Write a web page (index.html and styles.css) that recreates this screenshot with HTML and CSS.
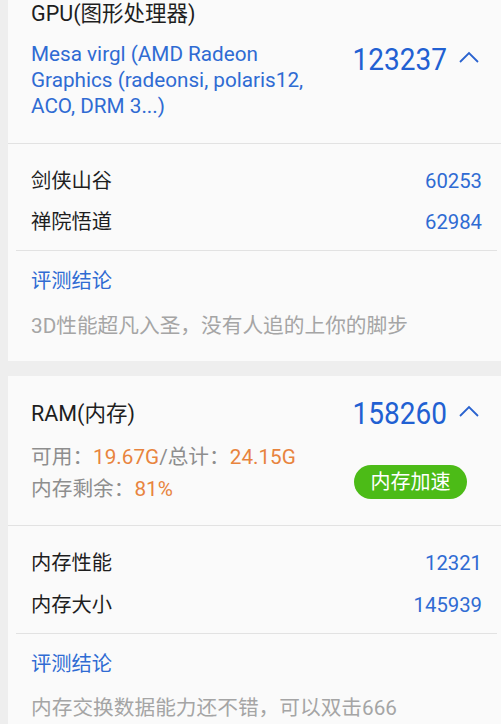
FILE: index.html
```html
<!DOCTYPE html>
<html lang="zh">
<head>
<meta charset="utf-8">
<link rel="stylesheet" href="styles.css">
</head>
<body>
<div class="page">
  <section class="card gpu">
    <div class="head">
      <div class="title">GPU(图形处理器)</div>
      <div class="head-body">
        <div class="model">Mesa virgl (AMD Radeon Graphics (radeonsi, polaris12, ACO, DRM 3...)</div>
        <div class="score">
          <span class="num">123237</span>
          <svg class="chev" width="20" height="12" viewBox="0 0 20 12"><polyline points="1,11 10,2 19,11" fill="none" stroke="#2a63cf" stroke-width="1.8"/></svg>
        </div>
      </div>
    </div>
    <div class="rows">
      <div class="row"><span>剑侠山谷</span><span class="val">60253</span></div>
      <div class="row"><span>禅院悟道</span><span class="val">62984</span></div>
    </div>
    <div class="concl">
      <div class="concl-title">评测结论</div>
      <div class="concl-text">3D性能超凡入圣，没有人追的上你的脚步</div>
    </div>
  </section>

  <section class="card ram">
    <div class="head">
      <div class="head-top">
        <div class="title">RAM(内存)</div>
        <div class="score">
          <span class="num">158260</span>
          <svg class="chev" width="20" height="12" viewBox="0 0 20 12"><polyline points="1,11 10,2 19,11" fill="none" stroke="#2a63cf" stroke-width="1.8"/></svg>
        </div>
      </div>
      <div class="ram-body">
        <div class="info">
          <div>可用：<span class="hl">19.67G</span>/总计：<span class="hl">24.15G</span></div>
          <div>内存剩余：<span class="hl">81%</span></div>
        </div>
        <div class="boost">内存加速</div>
      </div>
    </div>
    <div class="rows">
      <div class="row"><span>内存性能</span><span class="val">12321</span></div>
      <div class="row"><span>内存大小</span><span class="val">145939</span></div>
    </div>
    <div class="concl">
      <div class="concl-title">评测结论</div>
      <div class="concl-text">内存交换数据能力还不错，可以双击666</div>
    </div>
  </section>
</div>
</body>
</html>
```
FILE: styles.css
```css
html, body {
  margin: 0;
  padding: 0;
  background: #eeeeee;
  overflow: hidden;
}
body {
  font-family: Roboto, "Noto Sans CJK SC", sans-serif;
  color: #222;
  width: 501px;
}
.page {
  display: flex;
  flex-direction: column;
  gap: 15px;
}
.card {
  background: #fafafa;
  margin: 0 -4px 0 8px;
}
.head {
  padding: 0 23px 24px 23px;
  border-bottom: 1px solid #e2e2e2;
}
.ram .head { padding-top: 21px; padding-bottom: 20px; }
.title {
  font-size: 21.5px;
  line-height: 28px;
  color: #1e1e1e;
}
.head-body {
  display: flex;
  align-items: flex-start;
  justify-content: space-between;
  margin-top: 13px;
}
.model {
  width: 292px;
  font-size: 20.7px;
  line-height: 26px;
  color: #2f6bd3;
}
.score {
  display: flex;
  align-items: center;
  gap: 12px;
  margin-right: 3px;
}
.gpu .score { margin-top: 2px; }
.num {
  display: inline-block;
  font-size: 28px;
  line-height: 34px;
  color: #2160d2;
  transform: scaleY(1.12);
}
.chev { margin-top: -6px; }
.head-top {
  display: flex;
  justify-content: space-between;
  align-items: center;
}
.ram-body {
  display: flex;
  justify-content: space-between;
  align-items: flex-end;
  margin-top: 10px;
}
.info {
  font-size: 20.7px;
  line-height: 32px;
  color: #8e8e8e;
}
.hl { color: #e8843e; }
.boost {
  width: 113px;
  height: 34px;
  border-radius: 17px;
  background: #4cbb17;
  color: #fff;
  font-size: 20px;
  line-height: 34px;
  text-align: center;
  margin-bottom: 6px;
  margin-right: 15px;
}
.rows {
  padding: 17px 15px 7px 15px;
  margin: 0 8px;
  border-bottom: 1px solid #e2e2e2;
}
.ram .rows { padding-top: 16px; }
.row {
  display: flex;
  justify-content: space-between;
  font-size: 20.3px;
  line-height: 41px;
  color: #1e1e1e;
}
.ram .row { line-height: 42px; }
.val { color: #2f6bd3; }
.concl {
  padding: 15px 23px 20px 23px;
}
.concl-title {
  font-size: 20.3px;
  line-height: 30px;
  color: #2f6bd3;
}
.concl-text {
  margin-top: 15px;
  font-size: 20.7px;
  line-height: 30px;
  color: #a5a5a5;
}
.ram .concl-text { margin-top: 14px; }
```
